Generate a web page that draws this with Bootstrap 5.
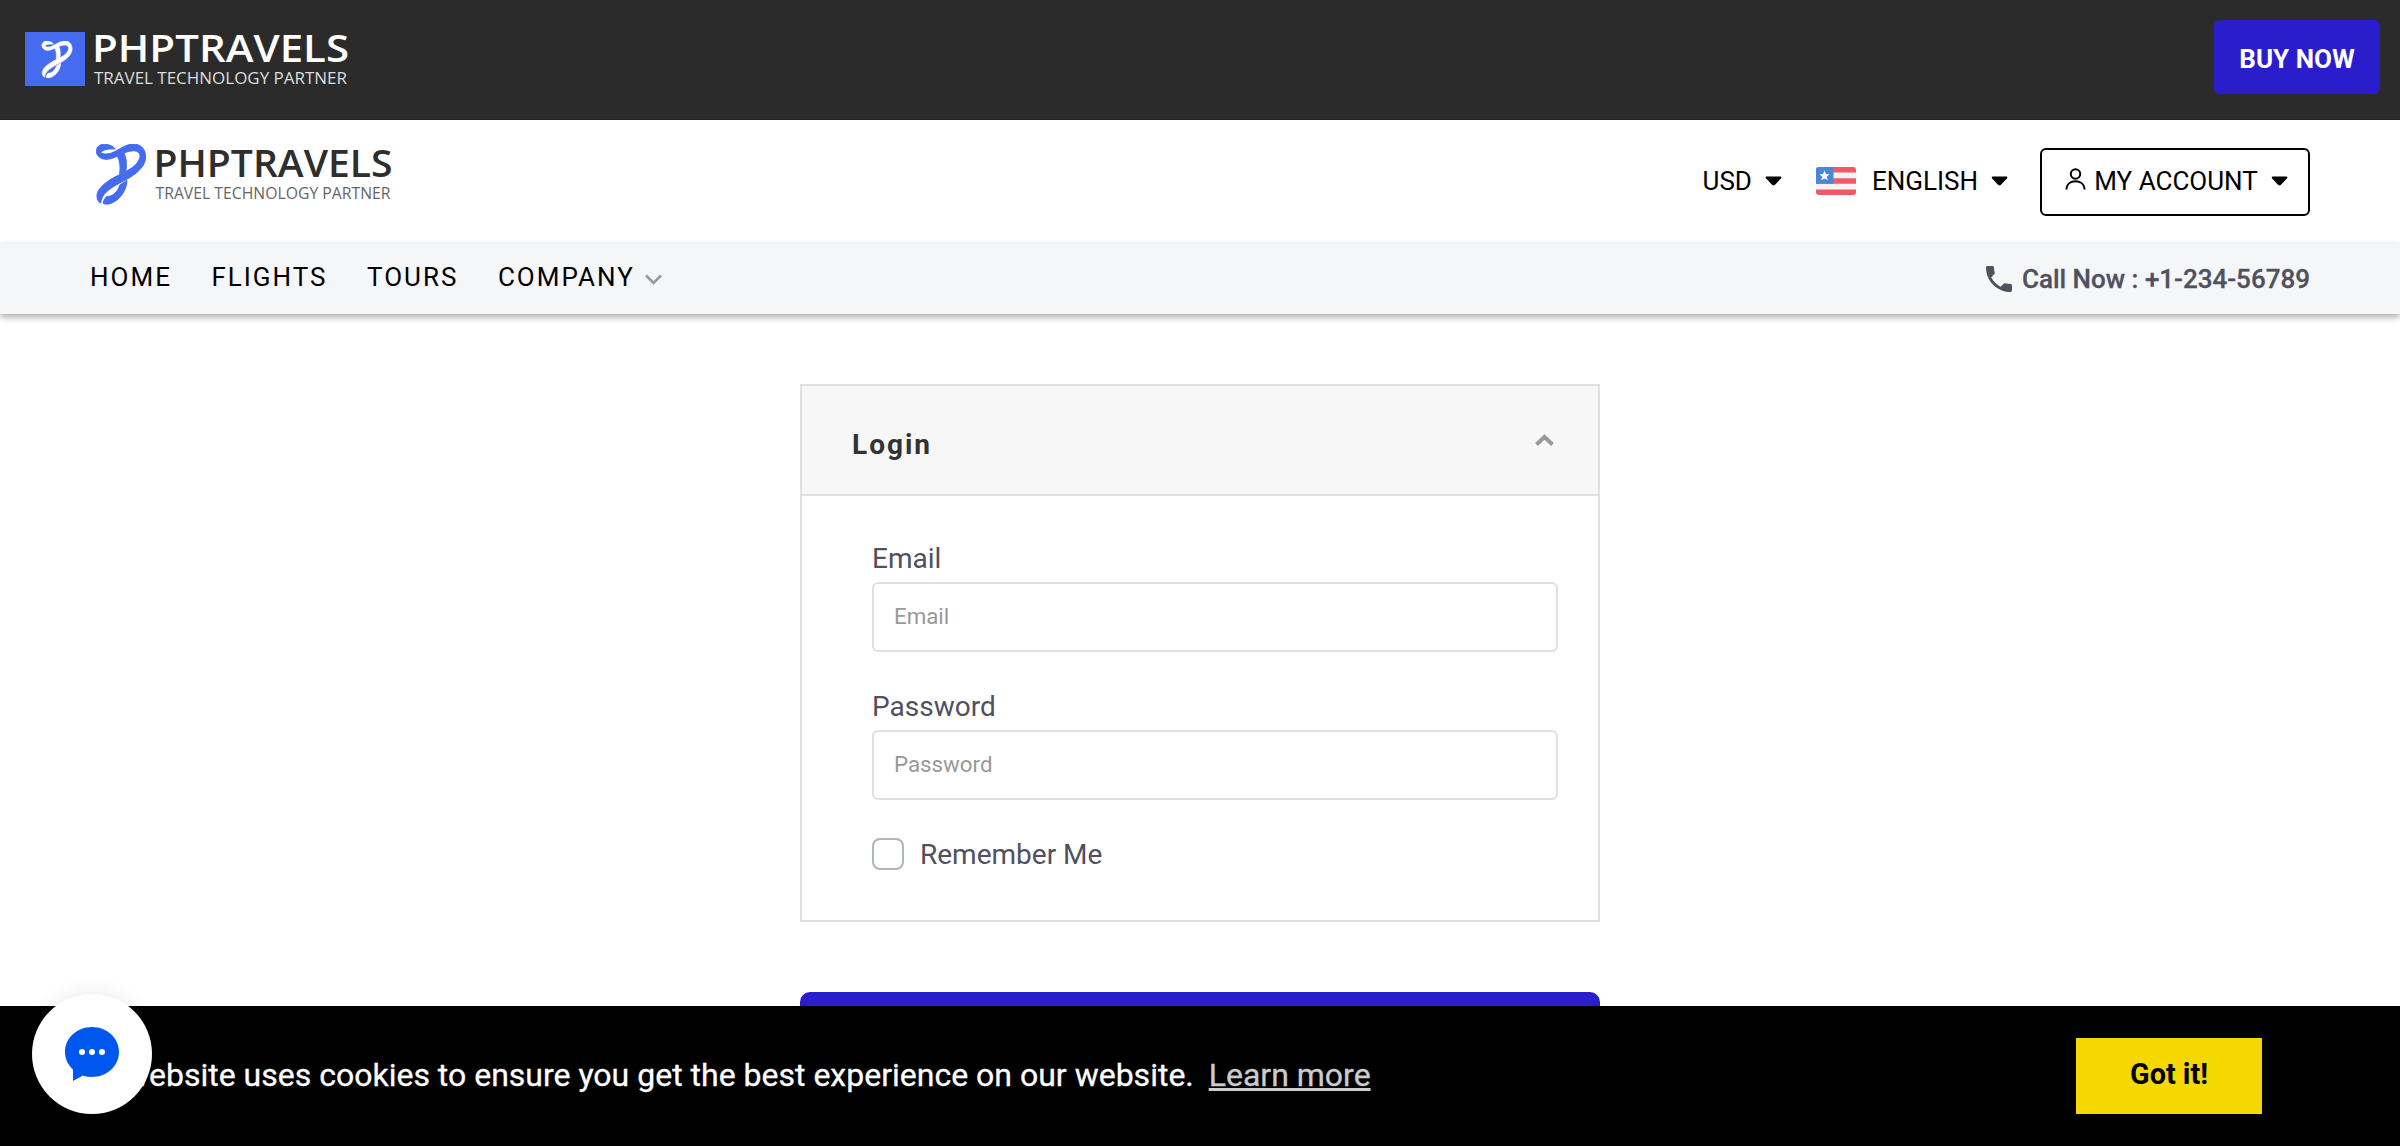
<!DOCTYPE html>
<html lang="en">
<head>
<meta charset="utf-8">
<title>Login - PHPTRAVELS</title>
<link rel="stylesheet" href="https://cdn.jsdelivr.net/npm/bootstrap@5.3.0/dist/css/bootstrap.min.css">
<style>
body{font-family:Roboto,"Liberation Sans",sans-serif;font-size:26px;line-height:1.5;color:#50505f;height:1146px;overflow:hidden;background:#fff}
svg{display:block;flex:none;overflow:visible}
.promo{height:120px;background:#2b2b2b;border-bottom:1px solid #222;padding:0 20px 0 25px}
.btn.buy{width:166px;height:74px;background:#2a1dcc;color:#fff;font-weight:700;font-size:26px;line-height:77px;border-radius:6px;margin-top:-6px}
.brandbar{height:124px;padding:0 90px 0 95px}
.menu{color:#000}
.menu-item{margin-top:-2px}
.menu-item svg:last-child{margin-left:13px}
.pill{height:68px;width:270px;border:2px solid #000;border-radius:6px;margin-left:32px;padding:0 20px 2px 23px}
.pill span{margin-left:-5px}
.mainnav{height:70px;background:#f4f6f8;padding:0 90px;box-shadow:0 3px 7px rgba(0,0,0,.34)}
.mainnav .links{gap:39.5px;margin-top:-4px}
.mainnav a{color:#000;text-decoration:none;letter-spacing:2px}
.call{font-weight:500;gap:10px;-webkit-text-stroke:.3px #50505f}
.panel{width:800px;height:538px;margin:70px auto 70px;border:2px solid #e0e0e0}
.panel-top{height:110px;background:#f7f7f7;border-bottom:2px solid #e0e0e0;padding:0 44px 0 50px}
.panel-top h3{font-size:28px;font-weight:700;letter-spacing:2px;color:#333;margin:9px 0 0}
.fields{padding:42px 40px 0 70px;font-size:28px}
.fields .field-label{line-height:42px;display:block;margin-bottom:2px}
.fields .form-control{height:70px;border:2px solid #e0e0e0;border-radius:6px;font-size:22.3px;padding:0 20px 2px;margin-bottom:34px}
.form-control::placeholder{color:#999;opacity:1}
.fields .form-check-input{width:32px;height:32px;border:2px solid #adb5bd;border-radius:8px;margin:0}
.remember{margin-top:38px;height:32px;gap:16px}
.remember label{padding-top:2px}
.btn.submit{display:block;width:800px;height:80px;margin:0 auto;background:#2a1dcc;border:0;border-radius:10px}
.cookie{height:140px;background:#000;color:#fff;font-size:32px;padding:0 138px 0 56px}
.cookie-text{margin-top:-2px;-webkit-text-stroke:.3px currentColor}
.cookie a{color:#ccc;margin-left:7px}
.btn.gotit{width:186px;height:76px;background:#f4d800;color:#000;font-weight:700;font-size:28.8px;border-radius:0;padding:0 0 2px}
.chat{position:fixed;left:32px;bottom:32px;z-index:1040;width:120px;height:120px;background:#fff;border-radius:50%;box-shadow:0 0 20px rgba(0,0,0,.1)}
</style>
<script src="https://cdn.jsdelivr.net/npm/bootstrap@5.3.0/dist/js/bootstrap.bundle.min.js"></script>
</head>
<body>
<svg width="0" height="0" class="position-absolute">
<symbol id="ribbon" viewBox="0 0 150 181">
<g fill="currentColor" stroke="currentColor" stroke-width="3" stroke-linejoin="round">
<path d="M30 1C14-2 0 8 1 24C4 40 20 48 38 45C62 42 80 22 112 20C128 20 135 30 131 42C124 66 98 78 70 92C36 108 0 134 3 158C4 168 8 174 14 177C16 150 40 134 72 116C100 102 148 78 149 38C148 8 128 0 112 0C88 0 66 20 46 27C34 31 22 31 14 26C20 17 34 13 58 15C50 6 42 2 30 1Z"/>
<path d="M64 36L84 27C92 44 92 60 90 80L71 90C74 68 72 50 64 36Z"/>
<path d="M93 109C92 140 70 172 36 181C28 182 24 180 21 177C24 168 27 162 32 157C50 159 66 142 72 122Z"/>
</g>
</symbol>
<symbol id="caret" viewBox="0 0 17 10"><path d="M1.500 .5H15.500Q17 .8 16 2.300L10 8.800Q8.500 10 7 8.800L1 2.300Q0 .8 1.500 .5Z"/></symbol>
</svg>

<header class="promo d-flex align-items-center justify-content-between">
<svg width="330" height="60" viewBox="25 30 330 60"><path d="M25 32H85V86H25Z" fill="#456bf0"/><use href="#ribbon" x="40.500" y="41" width="33" height="37" color="#fff"/>
<g font-family="Open Sans,sans-serif" fill="#fff"><text x="92" y="62" font-size="37" font-weight="600" textLength="257" lengthAdjust="spacingAndGlyphs">PHPTRAVELS</text><text x="94" y="84" font-size="17" fill="#ddd" textLength="253" lengthAdjust="spacingAndGlyphs">TRAVEL TECHNOLOGY PARTNER</text></g></svg>
<a class="btn buy p-0" href="#">BUY NOW</a>
</header>

<div class="brandbar d-flex align-items-center justify-content-between">
<svg width="300" height="70" viewBox="95 147 300 70"><use href="#ribbon" x="96" y="144" width="50" height="60.500" color="#456bf0"/>
<g font-family="Open Sans,sans-serif"><text x="153.500" y="177" font-size="37" font-weight="600" fill="#2e2e2e" textLength="239" lengthAdjust="spacingAndGlyphs">PHPTRAVELS</text><text x="155.500" y="199" font-size="17" fill="#666" textLength="235" lengthAdjust="spacingAndGlyphs">TRAVEL TECHNOLOGY PARTNER</text></g></svg>
<div class="menu d-flex align-items-center">
<div class="menu-item d-flex align-items-center"><span>USD</span><svg width="17" height="10"><use href="#caret"/></svg></div>
<div class="menu-item d-flex align-items-center">
<svg width="40" height="28" viewBox="0 0 40 28" class="me-3" style="margin-left:34px"><clipPath id="fl"><rect width="40" height="28" rx="3"/></clipPath><g clip-path="url(#fl)"><path fill="#f5f5f5" d="M0 0H40V28H0Z"/><path fill="#f45867" d="M0 0H40V5.600H0ZM0 11.200H40V16.800H0ZM0 22.400H40V28H0Z"/><path fill="#4a85d8" d="M0 0H17.500V16.800H0Z"/><path fill="#fff" d="M8.500 3.600L10 7L13.500 7.300L10.900 9.700L11.700 13.200L8.500 11.400L5.300 13.200L6.100 9.700L3.500 7.300L7 7Z"/></g></svg>
<span>ENGLISH</span><svg width="17" height="10"><use href="#caret"/></svg></div>
<div class="pill d-flex align-items-center justify-content-between">
<svg width="21" height="22" viewBox="0 0 21 22" fill="none" stroke="#000" stroke-width="2" style="margin-top:-5px"><circle cx="10.500" cy="6" r="4.700"/><path d="M1.500 21.500V20.500C2 16 5.500 13.200 10.500 13.200S19 16 19.500 20.500V21.500"/></svg>
<span>MY ACCOUNT</span><svg width="17" height="10"><use href="#caret"/></svg>
</div>
</div>
</div>

<nav class="mainnav d-flex align-items-center justify-content-between">
<div class="links d-flex align-items-center"><a href="#">HOME</a><a href="#">FLIGHTS</a><a href="#">TOURS</a><a href="#" class="d-flex align-items-center">COMPANY<svg width="17" height="11" fill="none" stroke="#999" stroke-width="2.500" style="margin:4px 0 0 10px"><path d="M1 1.500L8.500 9L16 1.500"/></svg></a></div>
<div class="call d-flex align-items-center"><svg width="26" height="26" viewBox="3 3 18 18" fill="#50505f"><path d="M6.620 10.790c1.440 2.830 3.760 5.140 6.590 6.590l2.200-2.200c.27-.27.67-.36 1.020-.24 1.120.37 2.330.57 3.570.57.55 0 1 .45 1 1V20c0 .55-.45 1-1 1-9.390 0-17-7.610-17-17 0-.55.45-1 1-1h3.500c.55 0 1 .45 1 1 0 1.250.2 2.450.57 3.570.11.35.03.74-.25 1.020z"/></svg><span>Call Now : +1-234-56789</span></div>
</nav>

<main>
<form>
<section class="panel">
<div class="panel-top d-flex align-items-center justify-content-between"><h3>Login</h3><svg width="19" height="12" fill="none" stroke="#999" stroke-width="4" style="margin-top:-1px"><path d="M1.500 10.500L9.500 3L17.500 10.500"/></svg></div>
<div class="fields">
<label class="field-label" for="email">Email</label><input id="email" type="email" class="form-control" placeholder="Email">
<label class="field-label" for="pw">Password</label><input id="pw" type="password" class="form-control" placeholder="Password">
<div class="remember d-flex align-items-center"><input id="rem" type="checkbox" class="form-check-input"><label for="rem">Remember Me</label></div>
</div>
</section>
<button type="button" class="btn submit" aria-label="Login"></button>
</form>
</main>

<div class="cookie fixed-bottom d-flex align-items-center justify-content-between">
<span class="cookie-text">This website uses cookies to ensure you get the best experience on our website. <a href="#">Learn more</a></span>
<button type="button" class="btn gotit">Got it!</button>
</div>
<div class="chat d-flex align-items-center justify-content-center">
<svg width="54" height="54" viewBox="0 0 54 54"><path fill="#0057f0" d="M27 0C42 0 54 11 54 25S42 50 27 50Q22 50 18 48.500L8 54V42.500C3 38 0 32 0 25C0 11 12 0 27 0Z"/><g fill="#fff"><circle cx="17" cy="25" r="3"/><circle cx="27" cy="25" r="3"/><circle cx="37" cy="25" r="3"/></g></svg>
</div>
</body>
</html>
